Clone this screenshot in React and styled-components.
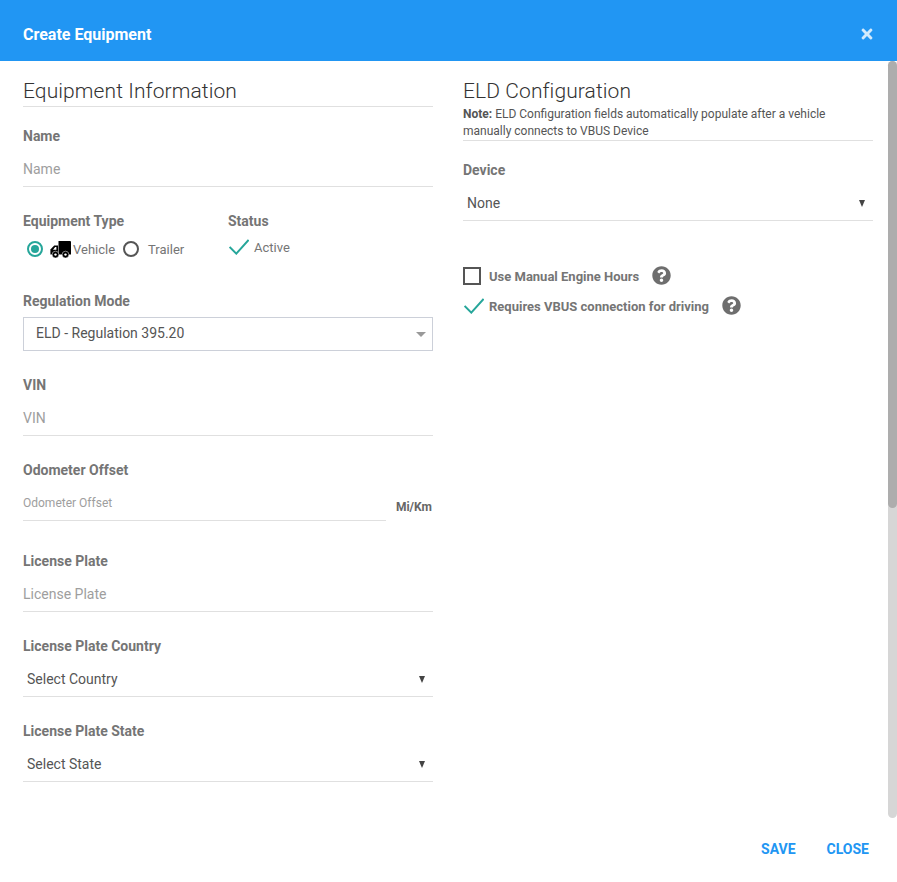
import React from 'react';
import styled, { createGlobalStyle } from 'styled-components';
import { FaQuestionCircle, FaTimes } from 'react-icons/fa';

const GlobalStyle = createGlobalStyle`
  html, body {
    margin: 0;
    padding: 0;
    height: 100%;
    background: #fff;
    overflow: hidden;
  }
  * {
    box-sizing: border-box;
  }
`;

const Dialog = styled.div`
  display: flex;
  flex-direction: column;
  width: 897px;
  height: 882px;
  font-family: Roboto, 'Liberation Sans', sans-serif;
  color: #757575;
`;

const Header = styled.header`
  flex: none;
  display: flex;
  align-items: center;
  justify-content: space-between;
  height: 61px;
  padding: 7px 24px 0 23px;
  background: #2196f3;
`;

const Title = styled.h1`
  margin: 0;
  font-size: 16px;
  font-weight: 700;
  color: #fff;
`;

const CloseIcon = styled(FaTimes)`
  width: 12px;
  height: 16px;
  margin-top: -1px;
  color: #fff;
  opacity: 0.8;
`;

const Body = styled.div`
  flex: none;
  display: flex;
  height: 757px;
  overflow: hidden;
`;

const Columns = styled.div`
  flex: 1;
  display: grid;
  grid-template-columns: 410px 410px;
  column-gap: 30px;
  align-items: start;
  padding: 16px 15px 0 23px;
`;

const ScrollTrack = styled.div`
  flex: none;
  width: 9px;
  border-radius: 5px;
  background: #d6d6d6;
`;

const ScrollThumb = styled.div`
  height: 447px;
  border-radius: 5px;
  background: #adadad;
`;

const Heading = styled.h2`
  margin: 0;
  height: ${(p) => (p.$ruled ? 30 : 29)}px;
  font-size: 21px;
  font-weight: 300;
  line-height: 28px;
  letter-spacing: 0.1px;
  color: #333;
  border-bottom: ${(p) => (p.$ruled ? '1px solid #e0e0e0' : 'none')};
`;

const Note = styled.p`
  margin: 0;
  height: 35px;
  font-size: 12px;
  line-height: 17px;
  color: #555;
  border-bottom: 1px solid #e0e0e0;

  b {
    font-weight: 700;
  }
`;

const Field = styled.div`
  margin-top: ${(p) => p.$top || 24}px;
`;

const Label = styled.div`
  height: 20px;
  font-size: 14px;
  font-weight: 700;
  line-height: 20px;
  color: #757575;
`;

const Line = styled.div`
  display: flex;
  align-items: center;
  justify-content: space-between;
  height: 41px;
  padding: ${(p) => (p.$select ? '13px 8px 7px 4px' : '13px 0 7px')};
  font-size: ${(p) => p.$size || 14}px;
  line-height: 20px;
  color: ${(p) => (p.$select ? '#555' : '#9e9e9e')};
  border-bottom: 1px solid #e0e0e0;
`;

const NativeArrow = styled.span`
  width: 0;
  height: 0;
  border-left: 3.5px solid transparent;
  border-right: 3.5px solid transparent;
  border-top: 7px solid #444;
`;

const OffsetRow = styled.div`
  display: flex;
  align-items: flex-end;
  gap: 10px;
  padding-right: 1px;
`;

const OffsetInput = styled.div`
  flex: 1;
`;

const Unit = styled.span`
  flex: none;
  padding-bottom: 6px;
  font-size: 12px;
  font-weight: 700;
  line-height: 16px;
  color: #666;
`;

const TwoUp = styled.div`
  display: grid;
  grid-template-columns: 205px 205px;
`;

const OptionRow = styled.div`
  display: flex;
  align-items: center;
  height: 36px;
  font-size: 13px;
  color: #757575;
`;

const Radio = styled.span`
  flex: none;
  display: flex;
  align-items: center;
  justify-content: center;
  width: 16px;
  height: 16px;
  margin: ${(p) => (p.$first ? '0 7px 0 4px' : '0 9px 0 8px')};
  border: 2px solid ${(p) => (p.$on ? '#26a69a' : '#555')};
  border-radius: 50%;

  &::after {
    content: '';
    display: ${(p) => (p.$on ? 'block' : 'none')};
    width: 8px;
    height: 8px;
    border-radius: 50%;
    background: #26a69a;
  }
`;

const TruckSvg = styled.svg`
  flex: none;
  width: 21px;
  height: 17px;
  margin-right: 2px;
`;

const TruckIcon = () => (
  <TruckSvg viewBox="0 0 21 17">
    <path d="M8.5 0 H20 a1 1 0 0 1 1 1 V13.5 H8.5 Z" fill="#000" />
    <path d="M8 4.5 H4.2 L0.4 8.6 V13.5 H8 Z" fill="#000" />
    <path d="M6.4 6 V8.8 H3 L5.2 6 Z" fill="#fff" />
    <circle cx="5.5" cy="13.6" r="3.4" fill="#000" stroke="#fff" strokeWidth="0.5" />
    <circle cx="5.5" cy="13.6" r="1.2" fill="#fff" />
    <circle cx="15.5" cy="13.6" r="3.4" fill="#000" stroke="#fff" strokeWidth="0.5" />
    <circle cx="15.5" cy="13.6" r="1.2" fill="#fff" />
  </TruckSvg>
);

const StatusRow = styled(OptionRow)`
  height: 32px;
  gap: 5px;
`;

const CheckSvg = styled.svg`
  flex: none;
  width: 20px;
  height: 16px;
  margin-left: 1px;
`;

const CheckMark = () => (
  <CheckSvg viewBox="0 0 20 16" fill="none">
    <path d="M0.6 8 L7.3 14.6 L19.6 1" stroke="#26a69a" strokeWidth="2" />
  </CheckSvg>
);

const SelectBox = styled.div`
  display: flex;
  align-items: center;
  justify-content: space-between;
  height: 34px;
  margin-top: 6px;
  padding: 0 6px 2px 12px;
  font-size: 14px;
  color: #555;
  border: 1px solid #ccd0d9;
`;

const GreyCaret = styled.span`
  width: 0;
  height: 0;
  margin-top: 2px;
  border-left: 5px solid transparent;
  border-right: 5px solid transparent;
  border-top: 5px solid #999;
`;

const Toggles = styled.div`
  margin-top: 40px;
`;

const ToggleRow = styled.div`
  display: flex;
  align-items: center;
  height: 30px;
`;

const ToggleMark = styled.span`
  flex: none;
  display: flex;
  width: 18px;
  margin-right: 8px;
`;

const CheckBox = styled.span`
  display: block;
  width: 18px;
  height: 18px;
  border: 2px solid #555;
`;

const ToggleLabel = styled.span`
  font-size: 13px;
  font-weight: 700;
  color: #757575;
`;

const Help = styled(FaQuestionCircle)`
  flex: none;
  width: 19px;
  height: 19px;
  margin: -2px 0 0 13px;
  color: #6e6e6e;
`;

const Footer = styled.footer`
  flex: 1;
  display: flex;
  align-items: flex-start;
  justify-content: flex-end;
  gap: 31px;
  padding: 23px 28px 0 0;
`;

const FooterButton = styled.button`
  padding: 0;
  border: 0;
  background: none;
  font-family: inherit;
  font-size: 14px;
  font-weight: 700;
  line-height: 16px;
  color: #2196f3;
`;

const TextField = ({ label, top, children }) => (
  <Field $top={top}>
    <Label>{label}</Label>
    <Line>{children}</Line>
  </Field>
);

const SelectField = ({ label, top, children }) => (
  <Field $top={top}>
    <Label>{label}</Label>
    <Line $select>
      {children}
      <NativeArrow />
    </Line>
  </Field>
);

export default function App() {
  return (
    <Dialog>
      <GlobalStyle />
      <Header>
        <Title>Create Equipment</Title>
        <CloseIcon />
      </Header>
      <Body>
        <Columns>
          <section>
            <Heading $ruled>Equipment Information</Heading>
            <TextField label="Name" top={19}>Name</TextField>
            <Field>
              <TwoUp>
                <div>
                  <Label>Equipment Type</Label>
                  <OptionRow>
                    <Radio $on $first />
                    <TruckIcon />
                    Vehicle
                    <Radio />
                    Trailer
                  </OptionRow>
                </div>
                <div>
                  <Label>Status</Label>
                  <StatusRow>
                    <CheckMark />
                    Active
                  </StatusRow>
                </div>
              </TwoUp>
            </Field>
            <Field>
              <Label>Regulation Mode</Label>
              <SelectBox>
                ELD - Regulation 395.20
                <GreyCaret />
              </SelectBox>
            </Field>
            <TextField label="VIN">VIN</TextField>
            <Field>
              <Label>Odometer Offset</Label>
              <OffsetRow>
                <OffsetInput>
                  <Line $size={12}>Odometer Offset</Line>
                </OffsetInput>
                <Unit>Mi/Km</Unit>
              </OffsetRow>
            </Field>
            <TextField label="License Plate" top={30}>License Plate</TextField>
            <SelectField label="License Plate Country">Select Country</SelectField>
            <SelectField label="License Plate State">Select State</SelectField>
          </section>
          <section>
            <Heading>ELD Configuration</Heading>
            <Note>
              <b>Note:</b> ELD Configuration fields automatically populate after a vehicle manually connects to VBUS Device
            </Note>
            <SelectField label="Device" top={19}>None</SelectField>
            <Toggles>
              <ToggleRow>
                <ToggleMark>
                  <CheckBox />
                </ToggleMark>
                <ToggleLabel>Use Manual Engine Hours</ToggleLabel>
                <Help />
              </ToggleRow>
              <ToggleRow>
                <ToggleMark>
                  <CheckMark />
                </ToggleMark>
                <ToggleLabel>Requires VBUS connection for driving</ToggleLabel>
                <Help />
              </ToggleRow>
            </Toggles>
          </section>
        </Columns>
        <ScrollTrack>
          <ScrollThumb />
        </ScrollTrack>
      </Body>
      <Footer>
        <FooterButton>SAVE</FooterButton>
        <FooterButton>CLOSE</FooterButton>
      </Footer>
    </Dialog>
  );
}
